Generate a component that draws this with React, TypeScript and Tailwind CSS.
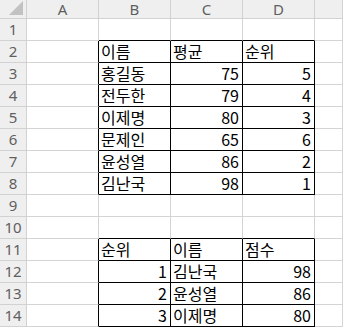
import React from 'react';

type Cell = string | number | null;

const colLetters = ['A', 'B', 'C', 'D', ''];

// rows 1..14, columns A..E
const sheet: Cell[][] = [
  [null, null, null, null, null],
  [null, '이름', '평균', '순위', null],
  [null, '홍길동', 75, 5, null],
  [null, '전두한', 79, 4, null],
  [null, '이제명', 80, 3, null],
  [null, '문제인', 65, 6, null],
  [null, '윤성열', 86, 2, null],
  [null, '김난국', 98, 1, null],
  [null, null, null, null, null],
  [null, null, null, null, null],
  [null, '순위', '이름', '점수', null],
  [null, 1, '김난국', 98, null],
  [null, 2, '윤성열', 86, null],
  [null, 3, '이제명', 80, null],
];

// col index: 1 = A ... 5 = E ; row index 1..14
const inTable = (r: number, c: number) =>
  c >= 2 && c <= 4 && ((r >= 2 && r <= 8) || (r >= 11 && r <= 14));

const font = { fontFamily: '"Noto Sans CJK KR", "Noto Sans", sans-serif' };

export default function App() {
  return (
    <div className="w-[343px] h-[328px] overflow-hidden bg-white">
      <div className="grid grid-cols-[27px_72px_72px_72px_72px_28px] grid-rows-[19px_repeat(14,22px)]">
        {/* corner */}
        <div className="bg-[#efefef] border-r border-b border-[#d2d2d2] relative">
          <svg width="27" height="19" className="absolute inset-0">
            <polygon points="9,15 23,15 23,1" fill="#c2c2c2" />
          </svg>
        </div>
        {colLetters.map((l, i) => (
          <div
            key={i}
            className="bg-[#efefef] border-r border-b border-[#d2d2d2] flex items-center justify-center text-[15px] leading-none text-[#5f5f5f] font-['Noto_Sans',sans-serif]"
          >
            {l}
          </div>
        ))}

        {sheet.map((row, ri) => {
          const r = ri + 1;
          return (
            <React.Fragment key={r}>
              <div className="bg-[#efefef] border-r border-b border-[#d2d2d2] flex items-center justify-center text-[15px] leading-none text-[#5f5f5f] font-['Noto_Sans',sans-serif]">
                {r}
              </div>
              {row.map((v, ci) => {
                const c = ci + 1;
                const rightBlack = inTable(r, c) || inTable(r, c + 1);
                const bottomBlack = inTable(r, c) || inTable(r + 1, c);
                const isNum = typeof v === 'number';
                return (
                  <div
                    key={c}
                    style={font}
                    className={
                      'border-r border-b border-[#d4d4d4] flex items-end pb-[1px] text-[16px] leading-[20px] text-black whitespace-nowrap ' +
                      (rightBlack ? 'border-r-black ' : '') +
                      (bottomBlack ? 'border-b-black ' : '') +
                      (isNum ? 'justify-end pr-[3px]' : 'justify-start pl-[2px]')
                    }
                  >
                    {v ?? ''}
                  </div>
                );
              })}
            </React.Fragment>
          );
        })}
      </div>
    </div>
  );
}
